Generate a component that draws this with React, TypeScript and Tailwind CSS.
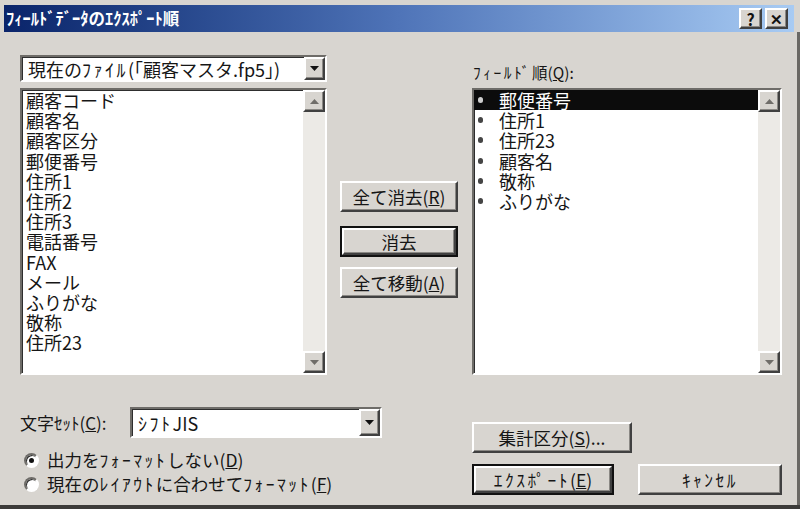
import React from 'react';

const LEFT_FIELDS = ['顧客コード', '顧客名', '顧客区分', '郵便番号', '住所1', '住所2', '住所3', '電話番号', 'FAX', 'メール', 'ふりがな', '敬称', '住所23'];
const ORDER = ['郵便番号', '住所1', '住所23', '顧客名', '敬称', 'ふりがな'];

const raised = 'border-2 border-t-white border-l-white border-r-[#404040] border-b-[#404040] bg-[#d8d5d0] shadow-[inset_-1px_-1px_0_#8a8884]';
const sunken = 'border-2 border-t-[#6e6c68] border-l-[#6e6c68] border-r-white border-b-white shadow-[inset_1px_1px_0_#2e2e2e]';

function Mn({ k }: { k: string }) {
  return <>(<u>{k}</u>)</>;
}

// half-width katakana run, a bit wider as in the old UI font
function H({ children }: { children: React.ReactNode }) {
  return <span className="tracking-[2.5px]">{children}</span>;
}

function Tri({ up, color }: { up?: boolean; color: string }) {
  return (
    <svg width="9" height="5" viewBox="0 0 9 5">
      <polygon points={up ? '0,5 9,5 4.5,0' : '0,0 9,0 4.5,5'} fill={color} />
    </svg>
  );
}

function ScrollBtn({ up }: { up?: boolean }) {
  return (
    <div className={`h-[22px] w-[22px] flex items-center justify-center ${raised}`}>
      <Tri up={up} color="#6f6d69" />
    </div>
  );
}

function ScrollBar() {
  return (
    <div className="w-[22px] flex flex-col bg-[#eceae6]">
      <ScrollBtn up />
      <div className="flex-1" />
      <ScrollBtn />
    </div>
  );
}

function Combo({ children, w, h }: { children: React.ReactNode; w: string; h: string }) {
  return (
    <div className={`${w} ${h} ${sunken} bg-white flex items-stretch`}>
      <div className="flex-1 pl-[6px] flex items-center text-[18px] leading-none whitespace-nowrap">{children}</div>
      <div className={`w-[21px] flex items-center justify-center ${raised}`}>
        <Tri color="#111" />
      </div>
    </div>
  );
}

function Btn({ children, w, def }: { children: React.ReactNode; w: string; def?: boolean }) {
  return (
    <div className={`${w} h-[31px] ${def ? 'border-2 border-[#111]' : ''}`}>
      <div className={`h-full w-full flex items-center justify-center text-[17.5px] leading-none whitespace-nowrap ${raised}`}>{children}</div>
    </div>
  );
}

function Radio({ on, children }: { on?: boolean; children: React.ReactNode }) {
  return (
    <div className="h-[24px] flex items-center">
      <div className="w-[15px] h-[15px] rounded-full bg-white border-2 border-t-[#6e6c68] border-l-[#6e6c68] border-r-white border-b-white shadow-[inset_1px_1px_0_#2e2e2e] flex items-center justify-center">
        {on && <div className="w-[5px] h-[5px] rounded-full bg-[#111]" />}
      </div>
      <span className="ml-[8px] text-[17.5px] leading-none whitespace-nowrap">{children}</span>
    </div>
  );
}

export default function App() {
  return (
    <div className="w-[800px] h-[509px] bg-[#d8d5d0] text-[#161616] font-['Noto_Sans_CJK_JP','Noto_Sans',sans-serif] flex flex-col border-b-4 border-b-[#3c3b39] overflow-hidden">
      {/* title bar */}
      <div className="flex pt-[5px] px-[4px]">
        <div className="flex-1 h-[27px] bg-linear-to-r from-[#0a246a] via-[#4f74b8] to-[#a8cbf3] flex items-center pl-[2px] pr-[6px]">
          <span className="flex-1 text-white font-bold text-[16.5px] leading-none">ﾌｨｰﾙﾄﾞﾃﾞｰﾀのｴｸｽﾎﾟｰﾄ順</span>
          <div className={`w-[23px] h-[21px] flex items-center justify-center font-bold text-[16px] leading-none text-[#111] ${raised}`}>?</div>
          <div className={`ml-[3px] w-[23px] h-[21px] flex items-center justify-center font-bold text-[15px] leading-none text-[#111] ${raised}`}>✕</div>
        </div>
        <div className="w-[2px]" />
      </div>

      <div className="flex-1 flex flex-col pl-[20px] border-r-[3px] border-r-[#6a6864]">
        {/* top section */}
        <div className="flex">
          <div className="w-[307px] pt-[23px]">
            <Combo w="w-[307px]" h="h-[27px]">現在の<H>ﾌｧｲﾙ</H>(｢顧客マスタ.fp5｣)</Combo>
            <div className={`mt-[6px] w-[307px] h-[287px] bg-white flex ${sunken}`}>
              <div className="flex-1 pl-[4px] text-[18px] leading-[20.2px]">
                {LEFT_FIELDS.map(f => (
                  <div key={f} className="h-[20.2px]">{f}</div>
                ))}
              </div>
              <ScrollBar />
            </div>
          </div>

          <div className="ml-[13px] w-[118px] pt-[149px] flex flex-col">
            <Btn w="w-[118px]">全て消去<Mn k="R" /></Btn>
            <div className="mt-[14px]">
              <Btn w="w-[118px]" def>消去</Btn>
            </div>
            <div className="mt-[10px]">
              <Btn w="w-[118px]">全て移動<Mn k="A" /></Btn>
            </div>
          </div>

          <div className="ml-[14px] w-[310px] pt-[30px]">
            <div className="h-[26px] text-[15.5px] leading-[20px] pl-[1px] whitespace-nowrap"><H>ﾌｨｰﾙﾄﾞ</H>順<Mn k="Q" />:</div>
            <div className={`w-[310px] h-[287px] bg-white flex ${sunken}`}>
              <div className="flex-1 text-[18px] leading-[20.2px]">
                {ORDER.map((f, i) => (
                  <div key={f} className={`flex items-center h-[20.2px] ${i === 0 ? 'bg-[#0c0c0c] text-white' : ''}`}>
                    <span className="ml-[4px] w-[5px] h-[6px] rounded-full bg-current opacity-80" />
                    <span className="ml-[16px]">{f}</span>
                  </div>
                ))}
              </div>
              <ScrollBar />
            </div>
          </div>
        </div>

        {/* bottom section */}
        <div className="flex">
          <div className="w-[452px] pt-[32px]">
            <div className="flex items-center">
              <span className="w-[110px] text-[17px] leading-none whitespace-nowrap">文字ｾｯﾄ<Mn k="C" />:</span>
              <Combo w="w-[252px]" h="h-[31px]"><H>ｼﾌﾄ</H> JIS</Combo>
            </div>
            <div className="mt-[10px] pl-[4px]">
              <Radio on>出力を<H>ﾌｫｰﾏｯﾄ</H>しない<Mn k="D" /></Radio>
              <Radio>現在の<H>ﾚｲｱｳﾄ</H>に合わせて<H>ﾌｫｰﾏｯﾄ</H><Mn k="F" /></Radio>
            </div>
          </div>
          <div className="pt-[47px]">
            <Btn w="w-[160px]">集計区分<Mn k="S" />...</Btn>
            <div className="mt-[11px] flex">
              <Btn w="w-[142px]" def><H>ｴｸｽﾎﾟｰﾄ</H><Mn k="E" /></Btn>
              <div className="ml-[24px]">
                <Btn w="w-[144px]"><H>ｷｬﾝｾﾙ</H></Btn>
              </div>
            </div>
          </div>
        </div>
      </div>
    </div>
  );
}
